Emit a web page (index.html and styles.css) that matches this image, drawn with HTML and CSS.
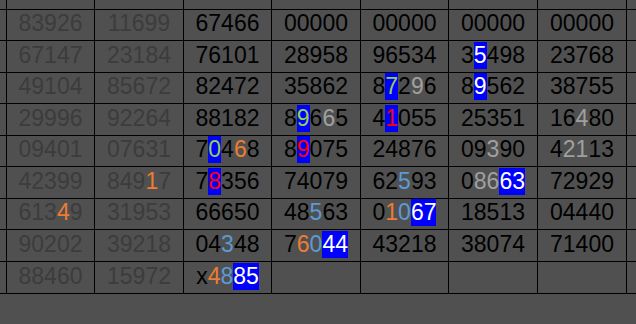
FILE: index.html
```html
<!DOCTYPE html>
<html>
<head>
<meta charset="utf-8">
<link rel="stylesheet" href="styles.css">
</head>
<body>
<div class="sheet">
  <div class="grid">
    <div class="c"></div><div class="c"></div><div class="c"></div><div class="c"></div><div class="c"></div><div class="c"></div><div class="c"></div><div class="c"></div><div class="c"></div>

    <div class="c"></div><div class="c dim">83926</div><div class="c dim">11699</div><div class="c">67466</div><div class="c">00000</div><div class="c">00000</div><div class="c">00000</div><div class="c">00000</div><div class="c"></div>

    <div class="c"></div><div class="c dim">67147</div><div class="c dim">23184</div><div class="c">76101</div><div class="c">28958</div><div class="c">96534</div><div class="c">3<span class="hl">5</span>498</div><div class="c">23768</div><div class="c"></div>

    <div class="c"></div><div class="c dim">49104</div><div class="c dim">85672</div><div class="c">82472</div><div class="c">35862</div><div class="c">8<span class="hl g">7</span>2<span class="gr">9</span>6</div><div class="c">8<span class="hl">9</span>562</div><div class="c">38755</div><div class="c"></div>

    <div class="c"></div><div class="c dim">29996</div><div class="c dim">92264</div><div class="c">88182</div><div class="c">8<span class="hl g">9</span>6<span class="gr">6</span>5</div><div class="c">4<span class="hl r">1</span>055</div><div class="c">25351</div><div class="c">16<span class="gr">4</span>80</div><div class="c"></div>

    <div class="c"></div><div class="c dim">09401</div><div class="c dim">07631</div><div class="c">7<span class="hl g">0</span>4<span class="o">6</span>8</div><div class="c">8<span class="hl r">9</span>075</div><div class="c">24876</div><div class="c">09<span class="gr">3</span>90</div><div class="c">4<span class="gr">21</span>13</div><div class="c"></div>

    <div class="c"></div><div class="c dim">42399</div><div class="c dim">849<span class="o">1</span>7</div><div class="c">7<span class="hl r">8</span>356</div><div class="c">74079</div><div class="c">62<span class="b">5</span>93</div><div class="c">0<span class="gr">86</span><span class="hl">63</span></div><div class="c">72929</div><div class="c"></div>

    <div class="c"></div><div class="c dim">613<span class="o">4</span>9</div><div class="c dim">31953</div><div class="c">66650</div><div class="c">48<span class="b">5</span>63</div><div class="c">0<span class="o">1</span><span class="b">0</span><span class="hl">67</span></div><div class="c">18513</div><div class="c">04440</div><div class="c"></div>

    <div class="c"></div><div class="c dim">90202</div><div class="c dim">39218</div><div class="c">04<span class="b">3</span>48</div><div class="c">7<span class="o">6</span><span class="b">0</span><span class="hl">44</span></div><div class="c">43218</div><div class="c">38074</div><div class="c">71400</div><div class="c"></div>

    <div class="c"></div><div class="c dim">88460</div><div class="c dim">15972</div><div class="c">x<span class="o">4</span><span class="b">8</span><span class="hl">85</span></div><div class="c"></div><div class="c"></div><div class="c"></div><div class="c"></div><div class="c"></div>
  </div>
</div>
</body>
</html>
```

FILE: styles.css
```css
html, body {
  margin: 0;
  padding: 0;
  background: #505050;
}

.sheet {
  width: 636px;
  height: 324px;
  overflow: hidden;
  background: #505050;
}

.grid {
  display: grid;
  grid-template-columns: 6px 87px 88px 87px 88px 87px 88px 88px 1fr;
  grid-template-rows: 9px 30px 31px 30px 31px 30px 31px 30px 31px 31px;
  gap: 1px;
  padding-bottom: 1px;
  background: #000;
}

.c {
  background: #505050;
  display: flex;
  align-items: center;
  justify-content: center;
  padding-bottom: 3px;
  box-sizing: border-box;
  font-family: "Liberation Sans", Arial, sans-serif;
  font-size: 23px;
  color: #000;
  white-space: nowrap;
  overflow: hidden;
}

.dim { color: #3c3c3c; }

.hl { background: #0000ff; color: #fff; }
.hl.g { color: #92d050; }
.hl.r { color: #ff0000; }

.gr { color: #a0a0a0; }
.o { color: #ed7d31; }
.b { color: #5b9bd5; }
```
